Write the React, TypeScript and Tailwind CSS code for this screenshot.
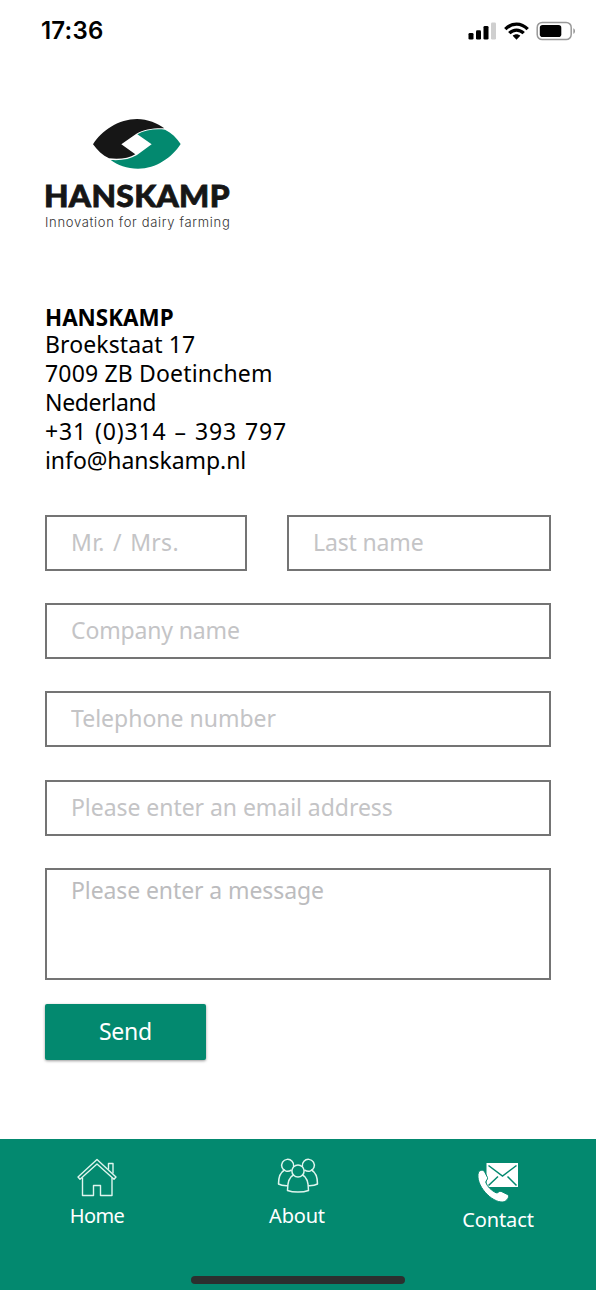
import { useState } from 'react';
import type { FormEvent, ReactNode } from 'react';

type TextFieldProps = {
  name: string;
  placeholder: string;
  type?: string;
  className: string;
};

type Tab = { id: string; label: string; icon: ReactNode; labelClass: string };

const Logo = () => (
  <div className="ml-[44px] flex h-[114px] w-[187px] flex-col text-[#161616]">
    <svg className="ml-[49px] h-[50px] w-[88px] shrink-0" viewBox="190 42 264 150">
      <path
        fill="#161616"
        d="M190 118C216 76 268 42 322 42C354 42 384 55 404 70C370 69 343 73 319 87L275 118L317 148C298 160 268 164 238 160C219 151 203 136 190 118Z"
      />
      <path
        fill="#03896f"
        d="M453 117C427 157 380 191 325 191C292 191 263 180 243 165C275 167 300 163 322 150L366 118L323 88C345 75 375 71 406 74C426 84 441 98 453 117Z"
      />
    </svg>
    <span className="mt-[7px] h-[38px] w-fit origin-left scale-x-[1.058] font-['Lato'] text-[30px] leading-[38px] font-black tracking-[0.3px] whitespace-nowrap [-webkit-text-stroke:0.8px_#161616]">
      HANSKAMP
    </span>
    <span className="ml-px font-['Inter'] text-[13px] leading-[17px] font-light tracking-[0.68px] whitespace-nowrap text-[#333]">
      Innovation for dairy farming
    </span>
  </div>
);

const StatusBar = () => (
  <header className="flex h-[61px] items-center justify-between pr-[20px] pl-[41px]">
    <span className="font-['Inter'] text-[24px] leading-[28px] font-semibold tracking-[0.2px] text-black">17:36</span>
    <svg width="108" height="20" viewBox="0 0 108 20">
      <rect x="0.5" y="12" width="5" height="6.5" rx="1.3" />
      <rect x="8" y="9.3" width="5" height="9.2" rx="1.3" />
      <rect x="15.5" y="5" width="5" height="13.5" rx="1.3" />
      <rect x="23" y="1.5" width="5" height="17" rx="1.3" fill="#cfcfcf" />
      <g fill="none" stroke="#000" strokeWidth="3.3">
        <path d="M37.3 8.2C43.8 1.4 53.3 1.4 59.7 8.2" />
        <path d="M41.3 12.2C45.5 8 51.5 8 55.7 12.2" />
      </g>
      <path d="M44.7 14.8C46.8 12.8 50.2 12.8 52.3 14.8L48.5 18.8Z" />
      <rect x="69.2" y="1.4" width="34" height="17.2" rx="5" fill="none" stroke="#999" strokeWidth="1.5" />
      <rect x="71.8" y="4" width="21.5" height="12" rx="2.8" />
      <path d="M105.3 7.2C107.6 8 107.6 12 105.3 12.8Z" fill="#999" />
    </svg>
  </header>
);

const TextField = ({ name, placeholder, type = 'text', className }: TextFieldProps) => (
  <input
    name={name}
    type={type}
    placeholder={placeholder}
    className={`h-[56px] border-2 border-[#747474] bg-white pb-[3px] pl-[24px] text-[23px] text-black outline-none placeholder:text-[#c4c4c6] ${className}`}
  />
);

const HomeIcon = () => (
  <svg className="h-[40px] w-[42px]" viewBox="0 0 42 40" fill="none" stroke="#dff5ee" strokeWidth="1.4" strokeLinejoin="round">
    <path d="M21 2.5L2 20L4 22.3L21 7L38 22.3L40 20Z" />
    <path d="M6.5 20.5V38.5H17.5V28.5H24.5V38.5H36V20.5" />
    <path d="M32.5 12.5V6.5H37V16.5" />
  </svg>
);

const AboutIcon = () => (
  <svg className="ml-[2px] h-[36px] w-[42px]" viewBox="0 0 42 36" fill="none" stroke="#dff5ee" strokeWidth="1.5" strokeLinecap="round" strokeLinejoin="round">
    <circle cx="21" cy="14" r="6.1" />
    <path d="M16.5 18C12 20 10.5 25.5 10.5 33.5C16 35.6 26 35.6 31.5 33.5C31.5 25.5 30 20 25.5 18" />
    <path d="M16.6 9.3A6 6 0 1 0 14.2 13.2" />
    <path d="M25.4 9.3A6 6 0 1 1 27.8 13.2" />
    <path d="M7.5 13C3 15.5 1.5 20.5 1.5 27C4 28.5 7 28.8 10.5 28.7" />
    <path d="M34.5 13C39 15.5 40.5 20.5 40.5 27C38 28.5 35 28.8 31.5 28.7" />
  </svg>
);

const ContactIcon = () => (
  <svg className="h-[41px] w-[42px]" viewBox="0 0 42 41">
    <path fill="#fff" d="M9.5 1H41V25H9.5Z" />
    <path
      fill="#fff"
      stroke="#03896f"
      strokeWidth="1"
      d="M1.5 10C3 8 6.5 7.5 7.7 10L10.5 15.5C11.2 17.5 8.5 18.5 8.8 20.5C10.5 25 14.5 28.5 19 30.8C21 31.5 22 28.8 24 29.3L30.5 32.5C33.5 34.5 29.5 39.5 26 40C15 41 -2.5 23 1.5 10Z"
    />
    <path fill="none" stroke="#03896f" strokeWidth="1.5" d="M11.5 3.5L25.5 14L39.5 3.5M11.5 23.5L21 14.5M39.5 23.5L30.5 14.5" />
  </svg>
);

const tabs: Tab[] = [
  { id: 'home', label: 'Home', icon: <HomeIcon />, labelClass: 'mt-[5px] tracking-[-0.6px]' },
  { id: 'about', label: 'About', icon: <AboutIcon />, labelClass: 'mt-[9px] tracking-[-0.2px]' },
  { id: 'contact', label: 'Contact', icon: <ContactIcon />, labelClass: 'mt-[3px] tracking-[-0.1px]' },
];

export default function App() {
  const [activeTab, setActiveTab] = useState('contact');

  const handleSubmit = (e: FormEvent) => {
    e.preventDefault();
  };

  return (
    <div className="flex h-[1290px] w-[596px] flex-col overflow-hidden bg-white font-['Noto_Sans',sans-serif]">
      <StatusBar />
      <main className="flex grow flex-col pt-[58px]">
        <Logo />

        <address className="mt-[71px] ml-[45px] flex flex-col text-[23px] leading-[29px] text-black not-italic">
          <strong className="h-[26px] text-[22.4px] leading-[28px] font-bold">HANSKAMP</strong>
          <span className="tracking-[0.1px]">Broekstaat 17</span>
          <span className="tracking-[0.17px]">7009 ZB Doetinchem</span>
          <span className="tracking-[-0.35px]">Nederland</span>
          <span className="tracking-[0.85px] [word-spacing:1.2px]">+31 (0)314 – 393 797</span>
          <span className="tracking-[-0.06px]">info@hanskamp.nl</span>
        </address>

        <form onSubmit={handleSubmit} className="mt-[40px] ml-[45px] flex w-[506px] flex-col">
          <div className="flex justify-between">
            <TextField name="title" placeholder="Mr. / Mrs." className="w-[202px] tracking-[0.3px] [word-spacing:2px]" />
            <TextField name="lastName" placeholder="Last name" className="w-[264px] tracking-[-0.15px]" />
          </div>
          <TextField name="company" placeholder="Company name" className="mt-[32px] tracking-[-0.15px]" />
          <TextField name="phone" type="tel" placeholder="Telephone number" className="mt-[32px]" />
          <TextField name="email" type="email" placeholder="Please enter an email address" className="mt-[33px] tracking-[-0.05px]" />
          <textarea
            name="message"
            placeholder="Please enter a message"
            className="mt-[32px] h-[112px] resize-none border-2 border-[#747474] bg-white pt-[8px] pl-[24px] text-[23px] leading-[24px] tracking-[-0.1px] text-black outline-none placeholder:text-[#bcbcbe]"
          />
          <button
            type="submit"
            className="mt-[24px] h-[56px] w-[161px] rounded-[2px] bg-[#03896f] pb-[2px] text-[23px] tracking-[-0.2px] text-white shadow-[0_1px_3px_rgba(0,0,0,0.4)]"
          >
            Send
          </button>
        </form>
      </main>

      <nav className="flex h-[151px] shrink-0 flex-col bg-[#03896f]">
        <div className="flex grow pt-[18px]">
          {tabs.map((tab) => (
            <button
              key={tab.id}
              onClick={() => setActiveTab(tab.id)}
              aria-current={activeTab === tab.id}
              className="flex w-[201px] shrink-0 flex-col items-center first:w-[194px] nth-2:w-[206px] last:w-[196px] last:pt-[5px]"
            >
              {tab.icon}
              <span className={`text-[20px] leading-[28px] text-white ${tab.labelClass}`}>{tab.label}</span>
            </button>
          ))}
        </div>
        <div className="mb-[6px] ml-[191px] h-[8px] w-[214px] rounded-full bg-[#2b302f]" />
      </nav>
    </div>
  );
}
